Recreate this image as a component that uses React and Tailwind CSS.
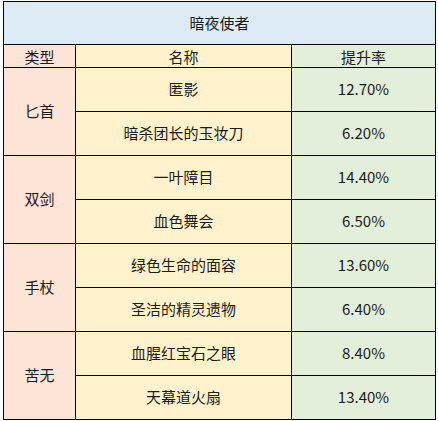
import React from "react";

const groups = [
  {
    type: "匕首",
    items: [
      { name: "匿影", rate: "12.70%" },
      { name: "暗杀团长的玉妆刀", rate: "6.20%" },
    ],
  },
  {
    type: "双剑",
    items: [
      { name: "一叶障目", rate: "14.40%" },
      { name: "血色舞会", rate: "6.50%" },
    ],
  },
  {
    type: "手杖",
    items: [
      { name: "绿色生命的面容", rate: "13.60%" },
      { name: "圣洁的精灵遗物", rate: "6.40%" },
    ],
  },
  {
    type: "苦无",
    items: [
      { name: "血腥红宝石之眼", rate: "8.40%" },
      { name: "天幕道火扇", rate: "13.40%" },
    ],
  },
];

const App = () => {
  return (
    <div
      className="w-[438px] h-[421px] overflow-hidden bg-white pl-[3px] pt-[1px] text-[15px] text-[#1c1c1c]"
      style={{ fontFamily: '"Noto Sans CJK SC", "Noto Sans", sans-serif' }}
    >
      <table className="w-[432px] table-fixed border-collapse">
        <colgroup>
          <col className="w-[72px]" />
          <col className="w-[216px]" />
          <col className="w-[144px]" />
        </colgroup>
        <tbody>
          <tr className="h-[43px]">
            <td colSpan={3} className="border border-black bg-[#ddebf7] p-0 text-center">
              暗夜使者
            </td>
          </tr>
          <tr className="h-[23px] leading-none">
            <td className="border border-black bg-[#fce4d6] p-0 text-center">类型</td>
            <td className="border border-black bg-[#fff2cc] p-0 text-center">名称</td>
            <td className="border border-black bg-[#e2efda] p-0 text-center">提升率</td>
          </tr>
          {groups.map((g) =>
            g.items.map((item, i) => (
              <tr key={item.name} className="h-[44px]">
                {i === 0 && (
                  <td rowSpan={2} className="border border-black bg-[#fce4d6] p-0 text-center">
                    {g.type}
                  </td>
                )}
                <td className="border border-black bg-[#fff2cc] p-0 text-center">{item.name}</td>
                <td className="border border-black bg-[#e2efda] p-0 text-center">{item.rate}</td>
              </tr>
            ))
          )}
        </tbody>
      </table>
    </div>
  );
};

export default App;
